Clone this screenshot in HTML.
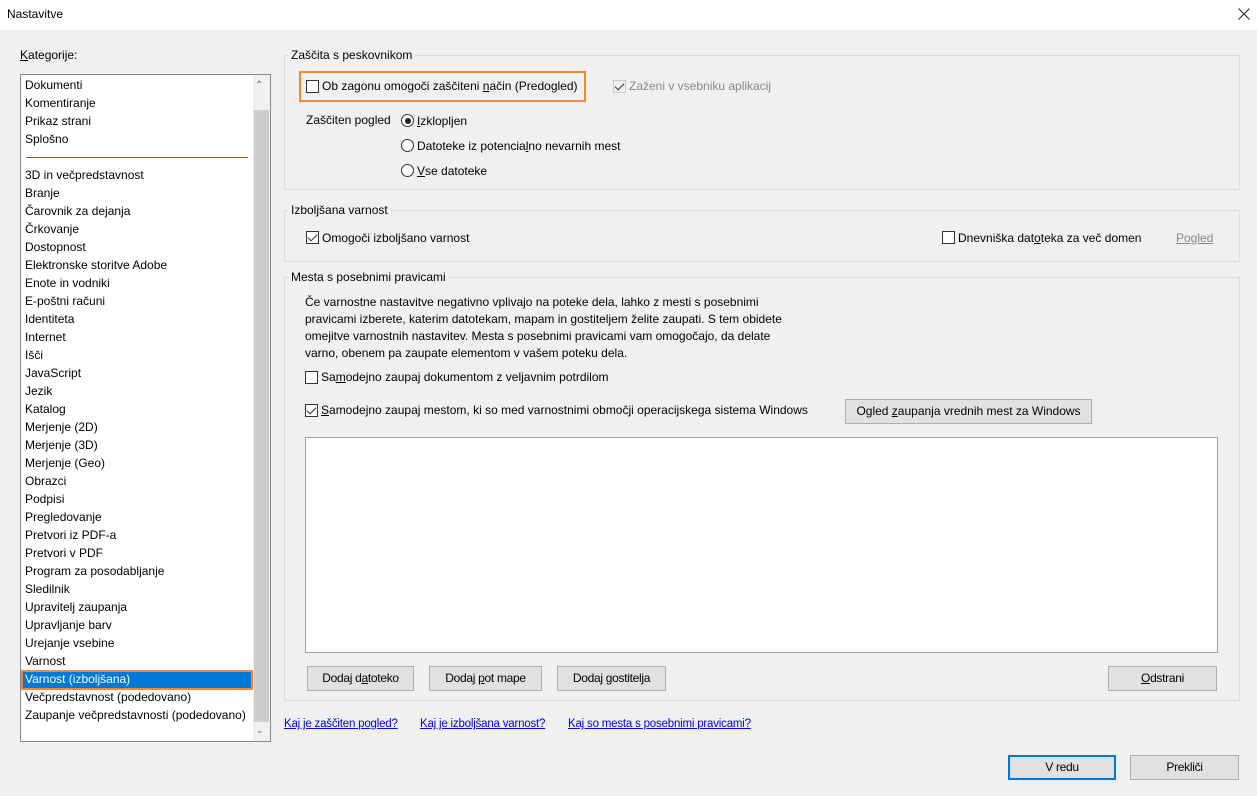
<!DOCTYPE html>
<html><head><meta charset="utf-8">
<style>
*{box-sizing:border-box;margin:0;padding:0}
body{width:1257px;height:796px;background:#f0f0f0;font-family:"Liberation Sans",sans-serif;font-size:12px;color:#000;position:relative;overflow:hidden}
.a{position:absolute;white-space:nowrap;line-height:16px}
.title{position:absolute;left:0;top:0;width:1257px;height:30px;background:#fff}
.grp{position:absolute;border:1px solid #dcdcdc}
.leg{position:absolute;background:#f0f0f0;padding:0 3px;line-height:16px}
.cb{position:absolute;width:13px;height:13px;border:1px solid #333;background:#fff}
.cb.c::after{content:"";position:absolute;left:3px;top:0px;width:4px;height:8px;border:solid #333;border-width:0 1.3px 1.3px 0;transform:rotate(45deg)}
.rb{position:absolute;width:13px;height:13px;border:1px solid #333;border-radius:50%;background:#fff}
.rb.c::after{content:"";position:absolute;left:2.5px;top:2.5px;width:6px;height:6px;border-radius:50%;background:#222}
.btn{position:absolute;background:#e1e1e1;border:1px solid #adadad;text-align:center;line-height:22px}
u{text-decoration:underline}
.lnk{position:absolute;color:#0000ee;text-decoration:underline;line-height:16px;white-space:nowrap;font-size:11.5px;letter-spacing:-0.2px}
.li{position:absolute;left:25px;line-height:16px;white-space:nowrap}
</style></head><body>
<div class="title"></div>
<div class="a" style="left:7px;top:6px">Nastavitve</div>
<svg style="position:absolute;left:1238px;top:8px" width="12" height="12"><path d="M0.5 0.5L11.5 11.5M11.5 0.5L0.5 11.5" stroke="#222" stroke-width="1"/></svg>

<div class="a" style="left:20px;top:47px"><u>K</u>ategorije:</div>
<div style="position:absolute;left:20px;top:74px;width:251px;height:668px;background:#fff;border:1px solid #828790"></div>
<div style="position:absolute;left:253px;top:75px;width:17px;height:666px;background:#f0f0f0"></div>
<div style="position:absolute;left:254px;top:110px;width:15px;height:612px;background:#cdcdcd"></div>
<div class="a" style="left:255px;top:78px;font-size:10px;color:#606060">&#8963;</div>
<div class="a" style="left:256px;top:722px;font-size:9px;color:#606060">&#8964;</div>
<div style="position:absolute;left:26px;top:157px;width:222px;height:1px;background:#1e78c8"></div>
<div class="li" style="top:77px">Dokumenti</div>
<div class="li" style="top:95px">Komentiranje</div>
<div class="li" style="top:113px">Prikaz strani</div>
<div class="li" style="top:131px">Splošno</div>
<div class="li" style="top:167px">3D in večpredstavnost</div>
<div class="li" style="top:185px">Branje</div>
<div class="li" style="top:203px">Čarovnik za dejanja</div>
<div class="li" style="top:221px">Črkovanje</div>
<div class="li" style="top:239px">Dostopnost</div>
<div class="li" style="top:257px">Elektronske storitve Adobe</div>
<div class="li" style="top:275px">Enote in vodniki</div>
<div class="li" style="top:293px">E-poštni računi</div>
<div class="li" style="top:311px">Identiteta</div>
<div class="li" style="top:329px">Internet</div>
<div class="li" style="top:347px">Išči</div>
<div class="li" style="top:365px">JavaScript</div>
<div class="li" style="top:383px">Jezik</div>
<div class="li" style="top:401px">Katalog</div>
<div class="li" style="top:419px">Merjenje (2D)</div>
<div class="li" style="top:437px">Merjenje (3D)</div>
<div class="li" style="top:455px">Merjenje (Geo)</div>
<div class="li" style="top:473px">Obrazci</div>
<div class="li" style="top:491px">Podpisi</div>
<div class="li" style="top:509px">Pregledovanje</div>
<div class="li" style="top:527px">Pretvori iz PDF-a</div>
<div class="li" style="top:545px">Pretvori v PDF</div>
<div class="li" style="top:563px">Program za posodabljanje</div>
<div class="li" style="top:581px">Sledilnik</div>
<div class="li" style="top:599px">Upravitelj zaupanja</div>
<div class="li" style="top:617px">Upravljanje barv</div>
<div class="li" style="top:635px">Urejanje vsebine</div>
<div class="li" style="top:653px">Varnost</div>
<div style="position:absolute;left:21px;top:670px;width:232px;height:20px;background:#0078d7;border:2px solid #f0883a"></div>
<div class="li" style="top:671px;color:#fff">Varnost (izboljšana)</div>
<div class="li" style="top:689px">Večpredstavnost (podedovano)</div>
<div class="li" style="top:707px">Zaupanje večpredstavnosti (podedovano)</div>

<div class="grp" style="left:284px;top:55px;width:956px;height:135px"></div>
<div class="leg" style="left:288px;top:47px">Zaščita s peskovnikom</div>
<div style="position:absolute;left:299px;top:71px;width:287px;height:31px;border:2px solid #f0883a"></div>
<div class="cb" style="left:306px;top:80px"></div>
<div class="a" style="left:322px;top:78px">Ob zagonu omogoči zaščiteni <u>n</u>ačin (Predogled)</div>
<div class="cb c" style="left:613px;top:80px;border-color:#c8c8c8;background:#f0f0f0"></div>
<div class="a" style="left:629px;top:78px;color:#888">Zaženi v vsebniku aplikacij</div>
<div class="a" style="left:306px;top:112px">Zaščiten pogled</div>
<div class="rb c" style="left:401px;top:114px"></div>
<div class="a" style="left:417px;top:113px"><u>I</u>zklopljen</div>
<div class="rb" style="left:401px;top:139px"></div>
<div class="a" style="left:417px;top:138px">Datoteke iz potencia<u>l</u>no nevarnih mest</div>
<div class="rb" style="left:401px;top:164px"></div>
<div class="a" style="left:417px;top:163px"><u>V</u>se datoteke</div>

<div class="grp" style="left:284px;top:210px;width:956px;height:52px"></div>
<div class="leg" style="left:288px;top:202px">Izboljšana varnost</div>
<div class="cb c" style="left:306px;top:231px"></div>
<div class="a" style="left:322px;top:230px">Omogoči izboljšano varnost</div>
<div class="cb" style="left:942px;top:231px"></div>
<div class="a" style="left:958px;top:230px">Dnevniška dat<u>o</u>teka za več domen</div>
<div class="a" style="left:1176px;top:230px;color:#888;text-decoration:underline">Pogled</div>

<div class="grp" style="left:284px;top:277px;width:956px;height:424px"></div>
<div class="leg" style="left:288px;top:269px">Mesta s posebnimi pravicami</div>
<div class="a" style="left:305px;top:294px;line-height:17px">Če varnostne nastavitve negativno vplivajo na poteke dela, lahko z mesti s posebnimi<br>pravicami izberete, katerim datotekam, mapam in gostiteljem želite zaupati. S tem obidete<br>omejitve varnostnih nastavitev. Mesta s posebnimi pravicami vam omogočajo, da delate<br>varno, obenem pa zaupate elementom v vašem poteku dela.</div>
<div class="cb" style="left:305px;top:371px"></div>
<div class="a" style="left:321px;top:369px">Sa<u>m</u>odejno zaupaj dokumentom z veljavnim potrdilom</div>
<div class="cb c" style="left:305px;top:404px"></div>
<div class="a" style="left:321px;top:402px"><u>S</u>amodejno zaupaj mestom, ki so med varnostnimi območji operacijskega sistema Windows</div>
<div class="btn" style="left:845px;top:399px;width:247px;height:25px">Ogled <u>z</u>aupanja vrednih mest za Windows</div>
<div style="position:absolute;left:305px;top:437px;width:913px;height:216px;background:#fff;border:1px solid #a0a0a0"></div>
<div class="btn" style="left:307px;top:666px;width:107px;height:25px;letter-spacing:-0.3px">Dodaj d<u>a</u>toteko</div>
<div class="btn" style="left:429px;top:666px;width:113px;height:25px;letter-spacing:-0.3px">Dodaj <u>p</u>ot mape</div>
<div class="btn" style="left:557px;top:666px;width:109px;height:25px;letter-spacing:-0.3px">Dodaj <u>g</u>ostitelja</div>
<div class="btn" style="left:1108px;top:666px;width:109px;height:25px;letter-spacing:-0.3px"><u>O</u>dstrani</div>

<div class="lnk" style="left:284px;top:716px">Kaj je zaščiten pogled?</div>
<div class="lnk" style="left:420px;top:716px">Kaj je izboljšana varnost?</div>
<div class="lnk" style="left:568px;top:716px">Kaj so mesta s posebnimi pravicami?</div>

<div class="btn" style="left:1008px;top:755px;width:108px;height:25px;border:2px solid #0078d7;line-height:21px;letter-spacing:-0.3px">V redu</div>
<div class="btn" style="left:1130px;top:755px;width:109px;height:25px;letter-spacing:-0.3px">Prekliči</div>
</body></html>
